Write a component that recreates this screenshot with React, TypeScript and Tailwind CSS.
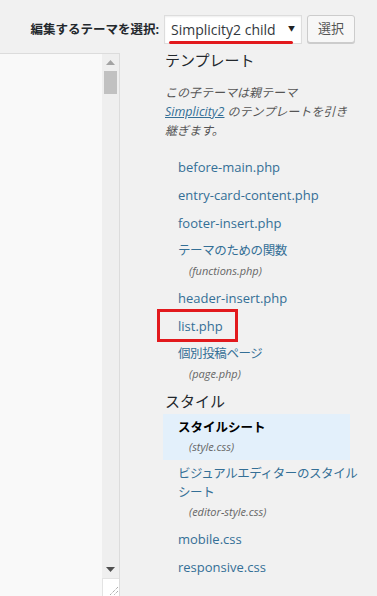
const files = [
  { name: "before-main.php" },
  { name: "entry-card-content.php" },
  { name: "footer-insert.php" },
  { name: "テーマのための関数", sub: "(functions.php)" },
  { name: "header-insert.php" },
  { name: "list.php", boxed: true },
  { name: "個別投稿ページ", sub: "(page.php)" },
];

const styles = [
  { name: "スタイルシート", sub: "(style.css)", current: true },
  { name: "ビジュアルエディターのスタイル", name2: "シート", sub: "(editor-style.css)" },
  { name: "mobile.css" },
  { name: "responsive.css" },
];

type Item = { name: string; name2?: string; sub?: string; boxed?: boolean; current?: boolean };

const isJa = (s: string) => /[^\x00-\x7f]/.test(s);

const FileItem = ({ item }: { item: Item }) => {
  return (
    <li className={`relative px-[15px] py-[4px] whitespace-nowrap ${item.current ? "bg-[#e3f0fb]" : ""}`}>
      {item.boxed && (
        <div className="absolute left-[-6px] top-[-3px] w-[81px] h-[33px] border-[3px] border-[#e2191d]" />
      )}
      {item.current ? (
        <span className="block leading-[19px] text-[12.5px] font-bold text-black">{item.name}</span>
      ) : (
        <span
          className={`block text-[#346f96] ${item.name2 ? "leading-[19px]" : "leading-[20px]"} ${
            isJa(item.name) ? "text-[12.5px] tracking-[-0.4px]" : "text-[13px]"
          }`}
        >
          {item.name}
          {item.name2 && <br />}
          {item.name2}
        </span>
      )}
      {item.sub && (
        <span className="block pl-[11px] leading-[19px] text-[11px] italic text-[#666]">{item.sub}</span>
      )}
    </li>
  );
};

const Arrow = ({ up, color }: { up?: boolean; color: string }) => {
  return (
    <svg width="9" height="5" viewBox="0 0 9 5">
      <path d={up ? "M0 5 L4.5 0 L9 5 Z" : "M0 0 L4.5 5 L9 0 Z"} fill={color} />
    </svg>
  );
};

const App = () => {
  return (
    <div className="w-[377px] h-[596px] overflow-hidden flex flex-col bg-[#f1f1f1] text-[#444] font-['Open_Sans','Noto_Sans_CJK_JP',sans-serif]">
      {/* theme select */}
      <div className="h-[48px] shrink-0 flex items-start justify-end gap-[5px] pt-[15px] pr-[22px]">
        <label className="h-[29px] leading-[29px] text-[12.5px] font-bold text-[#23282d] whitespace-nowrap">
          編集するテーマを選択:
        </label>
        <div className="relative w-[138px] h-[29px] flex items-center justify-between bg-white border border-[#ddd] shadow-[inset_0_1px_2px_rgba(0,0,0,0.07)] pl-[6px] pr-[6px]">
          <span className="text-[14px] text-[#32373c]">Simplicity2 child</span>
          <span className="text-[7px] text-[#222]">▼</span>
          <div className="absolute left-[4px] bottom-[-1px] w-[124px] h-[3px] bg-[#e2191d] rounded-full" />
        </div>
        <button className="w-[48px] h-[28px] rounded-[3px] border border-[#ccc] bg-[#f7f7f7] shadow-[0_1px_0_#ccc] text-[13px] text-[#555]">
          選択
        </button>
      </div>

      <div className="flex-1 min-h-0 flex">
        {/* editor textarea */}
        <div className="w-[120px] shrink-0 pt-[5px]">
          <div className="h-full flex border-t border-r border-[#dcdcdc] bg-[#f9f9f9]">
            <div className="flex-1" />
            <div className="w-[17px] flex flex-col bg-[#efefef]">
              <div className="h-[17px] flex items-center justify-center">
                <Arrow up color="#a3a3a3" />
              </div>
              <div className="mx-[2px] h-[23px] bg-[#c1c1c1]" />
              <div className="flex-1" />
              <div className="h-[17px] flex items-center justify-center">
                <Arrow color="#505050" />
              </div>
              <div className="h-[18px] bg-white border-t border-l border-[#e3e3e3] flex items-end justify-end">
                <svg width="12" height="12" viewBox="0 0 12 12">
                  <path d="M11 3 L3 11 M11 7 L7 11" stroke="#8a8a8a" strokeWidth="1" strokeDasharray="1 1" />
                </svg>
              </div>
            </div>
          </div>
        </div>

        {/* template list */}
        <div className="w-[187px] ml-[43px] flex flex-col">
          <h3 className="ml-[2px] leading-[24px] text-[15px] text-[#23282d]">テンプレート</h3>
          <p className="ml-[2px] mt-[11px] leading-[19px] text-[12px] italic text-[#555] whitespace-nowrap">
            この子テーマは親テーマ
            <br />
            <span className="underline text-[#346f96] text-[12.5px]">Simplicity2</span> のテンプレートを引き
            <br />
            継ぎます。
          </p>
          <ul className="mt-[13px] flex flex-col">
            {files.map((f) => (
              <FileItem key={f.name} item={f} />
            ))}
          </ul>
          <h3 className="ml-[2px] mt-[2px] mb-[1px] leading-[24px] text-[15px] text-[#23282d]">スタイル</h3>
          <ul className="flex flex-col">
            {styles.map((s) => (
              <FileItem key={s.name} item={s} />
            ))}
          </ul>
        </div>
      </div>
    </div>
  );
};

export default App;
